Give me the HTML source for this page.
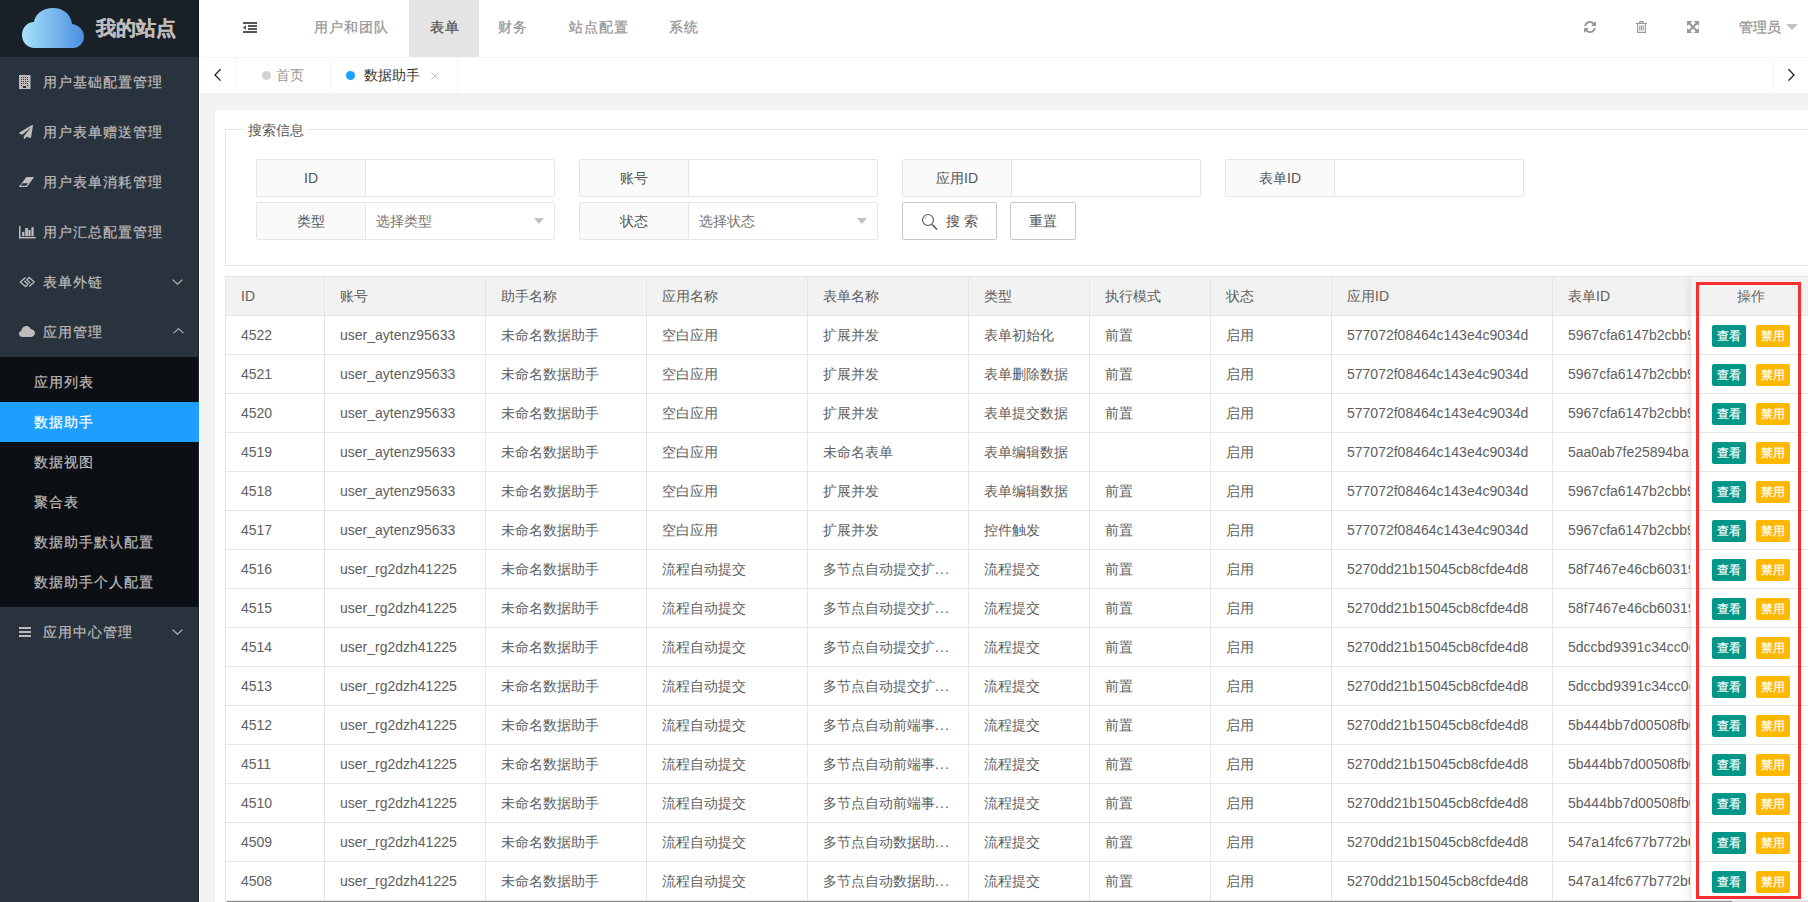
<!DOCTYPE html>
<html><head><meta charset="utf-8">
<style>
*{box-sizing:border-box;margin:0;padding:0}
html,body{width:1808px;height:902px;overflow:hidden;background:#f2f2f2;font-family:"Liberation Sans",sans-serif;position:relative}
.abs{position:absolute}
svg{position:absolute;overflow:visible}
#side{left:0;top:0;width:199px;height:902px;background:#28333E}
#side .edge{left:198px;top:0;width:1px;height:902px;background:rgba(0,0,0,.3)}
#wcol{left:199px;top:0;width:1px;height:902px;background:#fff}
#logo{left:0;top:0;width:199px;height:57px;background:#192027}
#logo .t{left:96px;top:15px;font-size:20px;font-weight:bold;color:rgb(191,187,187);-webkit-text-stroke:0.3px rgb(191,187,187);line-height:26px;white-space:nowrap}
.mi{left:0;width:198px;height:50px;color:rgb(191,187,187);font-size:14px;letter-spacing:1px;-webkit-text-stroke:0.2px currentColor;line-height:50px;white-space:nowrap}
.mi .tx{position:absolute;left:43px;top:0}
#sub{left:0;top:357px;width:198px;height:250px;background:#0c0f13}
.si{left:0;width:199px;height:40px;line-height:40px;font-size:14px;letter-spacing:1px;-webkit-text-stroke:0.2px currentColor;color:rgb(191,187,187);white-space:nowrap}
.si .tx{position:absolute;left:34px;top:0}
.si.on{background:#1E9FFF;color:#fff}
#hdr{left:199px;top:0;width:1609px;height:57px;background:#fff}
.nv{top:0;height:57px;line-height:55px;font-size:14px;letter-spacing:1px;-webkit-text-stroke:0.3px currentColor;color:#979797;white-space:nowrap}
#tabs{left:199px;top:57px;width:1609px;height:36px;background:#fff;border-top:1px solid #f6f6f6}
.tdiv{top:0;width:1px;height:35px;background:#f6f6f6}
.tt{top:57px;height:36px;line-height:36px;font-size:14px;white-space:nowrap}
#card{left:215px;top:110px;width:1700px;height:900px;background:#fff;border-radius:2px}
#fs{left:225px;top:129px;width:1700px;height:137px;border:1px solid #e6e6e6}
#legend{left:245px;top:120px;padding:0 3px;background:#fff;font-size:14px;line-height:20px;color:#5a5a5a}
.lab{position:absolute;height:38px;width:110px;border:1px solid #e6e6e6;background:#fafafa;border-radius:2px 0 0 2px;font-size:14px;color:#555;text-align:center;line-height:36px}
.inp{position:absolute;height:38px;width:190px;border:1px solid #e6e6e6;border-left:none;background:#fff;border-radius:0 2px 2px 0;font-size:14px;color:#757575;line-height:36px;padding-left:10px}
.tri{position:absolute;width:0;height:0;border-left:5px solid transparent;border-right:5px solid transparent;border-top:6px solid #c2c2c2}
.btn{position:absolute;height:38px;border:1px solid #c9c9c9;border-radius:2px;background:#fff;font-size:14px;color:#555;line-height:36px;text-align:center}
#tb{position:absolute;left:0;top:0;width:1808px;height:902px}
.tl{position:absolute;left:225px;top:276px;width:1600px;height:625px;border-left:1px solid #e6e6e6;border-top:1px solid #e6e6e6;background:#fff}
.hdrow{position:absolute;left:226px;width:1600px;height:38px;background:#f2f2f2}
.hl{position:absolute;left:225px;width:1600px;height:1px;background:#e6e6e6}
.vl{position:absolute;top:277px;width:1px;height:624px;background:#e6e6e6}
.c{position:absolute;height:38px;line-height:38px;font-size:14px;color:#606060;padding-left:16px;white-space:nowrap;overflow:hidden}
.el{letter-spacing:1.1px}
#fix{position:absolute;left:1690px;top:276px;width:130px;height:625px;background:#fff;box-shadow:-1px 0 8px rgba(0,0,0,.08);border-top:1px solid #e6e6e6;border-left:1px solid #e6e6e6}
.fhd{position:absolute;left:0;top:0;width:120px;height:38px;line-height:38px;background:#f2f2f2;text-align:center;font-size:14px;color:#666}
.fhl{position:absolute;left:0;width:130px;height:1px;background:#e6e6e6}
.b1,.b2{position:absolute;height:22px;width:34px;line-height:22px;font-size:12px;color:#fff;-webkit-text-stroke:0.2px #fff;text-align:center;border-radius:2px}
.b1{left:21px;background:#009688}
.b2{left:65px;background:#FFB800}
#scr{left:226px;top:901px;width:1582px;height:1px;background:#e2e2e2}
#scrt{left:227px;top:901px;width:1505px;height:1px;background:#8f8f8f}
#red{left:1696px;top:282px;width:105px;height:617px;border:3px solid #fa2e2e}
</style></head><body>
<div id="side" class="abs">
  <div id="logo" class="abs">
    <svg style="left:22px;top:8px" width="62" height="40" viewBox="0 0 62 40">
      <defs><linearGradient id="cg" x1="0" x2="1" y1="0" y2="0"><stop offset="0" stop-color="#a8e2fb"/><stop offset="1" stop-color="#4a8fe0"/></linearGradient></defs>
      <path d="M13 40 C5 40 0 34 0 27 C0 20 5 14 12 14 C13 6 21 0 31 0 C41 0 49 6 50 16 C56 17 62 21 62 29 C62 35 57 40 51 40 Z" fill="url(#cg)"/>
    </svg>
    <div class="abs t">我的站点</div>
  </div>
  <div class="abs mi" style="top:57px"><span class="tx">用户基础配置管理</span></div>
  <div class="abs mi" style="top:107px"><span class="tx">用户表单赠送管理</span></div>
  <div class="abs mi" style="top:157px"><span class="tx">用户表单消耗管理</span></div>
  <div class="abs mi" style="top:207px"><span class="tx">用户汇总配置管理</span></div>
  <div class="abs mi" style="top:257px"><span class="tx">表单外链</span></div>
  <div class="abs mi" style="top:307px"><span class="tx">应用管理</span></div>
  <div id="sub" class="abs"></div>
  <div class="abs edge"></div>
  <div class="abs si" style="top:362px"><span class="tx">应用列表</span></div>
  <div class="abs si on" style="top:402px"><span class="tx">数据助手</span></div>
  <div class="abs si" style="top:442px"><span class="tx">数据视图</span></div>
  <div class="abs si" style="top:482px"><span class="tx">聚合表</span></div>
  <div class="abs si" style="top:522px"><span class="tx">数据助手默认配置</span></div>
  <div class="abs si" style="top:562px"><span class="tx">数据助手个人配置</span></div>
  <div class="abs mi" style="top:607px"><span class="tx">应用中心管理</span></div>
  <!-- icons -->
  <svg style="left:19px;top:75px" width="12" height="14" viewBox="0 0 12 14"><path fill="rgb(191,187,187)" d="M0 0H11.5V14H0Z"/><g fill="#28333E"><rect x="2" y="2" width="1" height="1"/><rect x="4" y="2" width="1" height="1"/><rect x="6" y="2" width="1" height="1"/><rect x="8" y="2" width="1" height="1"/><rect x="2" y="4" width="1" height="1"/><rect x="4" y="4" width="1" height="1"/><rect x="6" y="4" width="1" height="1"/><rect x="8" y="4" width="1" height="1"/><rect x="2" y="6" width="1" height="1"/><rect x="4" y="6" width="1" height="1"/><rect x="6" y="6" width="1" height="1"/><rect x="8" y="6" width="1" height="1"/><rect x="2" y="8" width="1" height="1"/><rect x="4" y="8" width="1" height="1"/><rect x="6" y="8" width="1" height="1"/><rect x="8" y="8" width="1" height="1"/><rect x="2" y="10" width="1" height="1"/><rect x="8" y="10" width="1" height="1"/><rect x="4" y="11" width="3" height="2"/></g></svg>
  <svg style="left:19px;top:125px" width="14" height="14" viewBox="0 0 512 512"><path fill="rgb(191,187,187)" d="M476 3.2L12.5 270.6c-18.1 10.4-15.8 35.6 2.2 43.2L121 358.4l287.3-253.2c5.5-4.9 13.3 2.6 8.6 8.3L176 407v80.5c0 23.6 28.5 32.9 42.5 15.8L282 426l124.6 52.2c14.2 6 30.4-2.9 33-18.2l72-432C515 7.8 493.3-6.8 476 3.2z"/></svg>
  <svg style="left:19px;top:177px" width="16" height="10" viewBox="0 0 16 10"><path fill="rgb(191,187,187)" fill-rule="evenodd" d="M-0.3 9.9L7.4 0.1L15.2 0.1L7.9 9.9Z M1.6 8.8L3.7 6.2L9.1 6.2L7.1 8.8Z"/></svg>
  <svg style="left:19px;top:226px" width="17" height="13" viewBox="0 0 17 13"><g fill="rgb(191,187,187)"><rect x="0" y="0" width="1.5" height="12.4"/><rect x="0" y="10.9" width="16.7" height="1.5"/><rect x="3.1" y="5.8" width="2.3" height="4.3"/><rect x="6.2" y="2" width="2.7" height="8.1"/><rect x="9.3" y="3.9" width="2.3" height="6.2"/><rect x="12.4" y="1.2" width="2.3" height="8.9"/></g></svg>
  <svg style="left:16px;top:272px" width="22" height="20" viewBox="0 0 22 20"><g fill="none" stroke="rgb(191,187,187)" stroke-width="1.3" stroke-linejoin="round"><path d="M9.6 5.4L4.4 10L9.6 14.6L12 12.2L8.4 8.7"/><path d="M13.2 14.6L18.2 10L13.2 5.4L10.8 7.8L14.3 11.2"/></g></svg>
  <svg style="left:19px;top:326px" width="16" height="11" viewBox="0 0 16 11"><path fill="rgb(191,187,187)" d="M3.5 11C1.5 11 0 9.6 0 7.8C0 6.3 1 5.1 2.4 4.8C2.6 2.2 4.7 0 7.4 0C9.4 0 11 1.2 11.7 2.9C14 3 16 4.8 16 7.1C16 9.3 14.3 11 12 11Z"/></svg>
  <svg style="left:19px;top:627px" width="12" height="10" viewBox="0 0 12 10"><g fill="rgb(191,187,187)"><rect x="0" y="0" width="12" height="2"/><rect x="0" y="4" width="12" height="2"/><rect x="0" y="8" width="12" height="2"/></g></svg>
  <svg style="left:172px;top:279px" width="11" height="7" viewBox="0 0 11 7"><path fill="none" stroke="rgb(191,187,187)" stroke-width="1.1" d="M0.6 0.7L5.5 5.2L10.4 0.7"/></svg>
  <svg style="left:173px;top:327px" width="11" height="7" viewBox="0 0 11 7"><path fill="none" stroke="rgb(191,187,187)" stroke-width="1.1" d="M0.6 6.2L5.5 1.7L10.4 6.2"/></svg>
  <svg style="left:172px;top:629px" width="11" height="7" viewBox="0 0 11 7"><path fill="none" stroke="rgb(191,187,187)" stroke-width="1.1" d="M0.6 0.7L5.5 5.2L10.4 0.7"/></svg>
</div>
<div id="wcol" class="abs"></div>
<div id="hdr" class="abs"></div>
<svg style="left:243px;top:22px" width="14" height="11" viewBox="0 0 14 11"><g fill="#565656"><rect x="0" y="0" width="14" height="2"/><rect x="5" y="3" width="9" height="2"/><rect x="5" y="6" width="9" height="2"/><rect x="0" y="9" width="14" height="2"/><path d="M3 3V8L0 5.5Z"/></g></svg>
<div class="abs nv" style="left:314px">用户和团队</div>
<div class="abs nv" style="left:409px;width:70px;background:#e4e4e4;color:#565656;text-align:center;text-indent:1px">表单</div>
<div class="abs nv" style="left:498px">财务</div>
<div class="abs nv" style="left:569px">站点配置</div>
<div class="abs nv" style="left:669px">系统</div>
<svg style="left:1584px;top:21px" width="12" height="12" viewBox="0 0 1536 1536"><path fill="#979797" d="M1511 928q0 5-1 7-64 268-268 434.5T764 1536q-146 0-282.5-55T238 1324l-129 129q-19 19-45 19t-45-19-19-45V960q0-26 19-45t45-19h448q26 0 45 19t19 45-19 45l-137 137q71 66 161 102t187 36q134 0 250-65t186-179q11-17 53-117 8-23 30-23h192q13 0 22.5 9.5t9.5 22.5zm25-800v448q0 26-19 45t-45 19h-448q-26 0-45-19t-19-45 19-45l138-138Q969 256 768 256q-134 0-250 65T332 500q-11 17-53 117-8 23-30 23H50q-13 0-22.5-9.5T18 608v-7q65-268 270-434.5T768 0q146 0 284 55.5T1297 212l130-129q19-19 45-19t45 19 19 45z"/></svg>
<svg style="left:1636px;top:21px" width="11" height="12" viewBox="0 0 11 12"><g fill="none" stroke="#979797" stroke-width="1.1"><path d="M0 2.4H11"/><path d="M3.9 2.4V0.6H7.1V2.4"/><path d="M1.6 2.4V11.4H9.4V2.4"/><path d="M3.8 4.4V9.6M5.5 4.4V9.6M7.2 4.4V9.6"/></g></svg>
<svg style="left:1687px;top:21px" width="12" height="12" viewBox="0 0 12 12"><g fill="#979797"><path d="M0 0H5.3L0 5.1Z"/><path d="M12 0H6.7L12 5.1Z"/><path d="M0 12H5.3L0 6.9Z"/><path d="M12 12H6.7L12 6.9Z"/></g><path d="M1.5 1.5L10.5 10.5M10.5 1.5L1.5 10.5" stroke="#979797" stroke-width="2"/></svg>
<div class="abs nv" style="left:1739px;top:0;font-size:14px;letter-spacing:0">管理员</div>
<div class="abs tri" style="left:1786px;top:24px;border-left-width:6px;border-right-width:6px"></div>

<div id="tabs" class="abs">
  <div class="abs tdiv" style="left:36px"></div>
  <div class="abs tdiv" style="left:131px"></div>
  <div class="abs tdiv" style="left:258px"></div>
  <div class="abs tdiv" style="left:1574px"></div>
</div>
<svg style="left:214px;top:69px" width="8" height="13" viewBox="0 0 8 13"><path fill="none" stroke="#111" stroke-width="1.2" d="M6.6 0.2L1 6L6.6 11.6"/></svg>
<svg style="left:1787px;top:69px" width="8" height="13" viewBox="0 0 8 13"><path fill="none" stroke="#111" stroke-width="1.2" d="M1.4 0.2L7 6L1.4 11.6"/></svg>
<div class="abs" style="left:262px;top:71px;width:9px;height:9px;border-radius:50%;background:#d2d2d2"></div>
<div class="abs tt" style="left:276px;color:#999">首页</div>
<div class="abs" style="left:346px;top:71px;width:9px;height:9px;border-radius:50%;background:#1E9FFF"></div>
<div class="abs tt" style="left:364px;color:#333">数据助手</div>
<svg style="left:431px;top:72px" width="8" height="8" viewBox="0 0 8 8"><path fill="none" stroke="#c4c4c4" stroke-width="1" d="M0.5 0.5L7.5 7.5M7.5 0.5L0.5 7.5"/></svg>
<div id="card" class="abs"></div>
<div id="fs" class="abs"></div>
<div id="legend" class="abs">搜索信息</div>
<div class="lab" style="left:256px;top:159px">ID</div><div class="inp" style="left:366px;top:159px;width:189px"></div>
<div class="lab" style="left:579px;top:159px">账号</div><div class="inp" style="left:689px;top:159px;width:189px"></div>
<div class="lab" style="left:902px;top:159px">应用ID</div><div class="inp" style="left:1012px;top:159px;width:189px"></div>
<div class="lab" style="left:1225px;top:159px">表单ID</div><div class="inp" style="left:1335px;top:159px;width:189px"></div>
<div class="lab" style="left:256px;top:202px">类型</div><div class="inp" style="left:366px;top:202px;width:189px">选择类型</div><div class="tri" style="left:534px;top:218px"></div>
<div class="lab" style="left:579px;top:202px">状态</div><div class="inp" style="left:689px;top:202px;width:189px">选择状态</div><div class="tri" style="left:857px;top:218px"></div>
<div class="btn" style="left:902px;top:202px;width:95px"></div>
<svg style="left:922px;top:214px" width="16" height="16" viewBox="0 0 16 16"><g fill="none" stroke="#555" stroke-width="1.1"><circle cx="6" cy="6" r="5.5"/><path d="M10 10.5L15 15.5" stroke-width="1.6"/><path d="M3.2 4.6A3 3 0 0 1 4.4 3" stroke-width="0.9"/></g></svg>
<div class="abs" style="left:946px;top:202px;line-height:38px;font-size:14px;color:#555;white-space:nowrap">搜&nbsp;索</div>
<div class="btn" style="left:1010px;top:202px;width:66px">重置</div>
<div id="tb"><div class="tl"></div><div class="hdrow" style="top:277px"></div><div class="hl" style="top:315px"></div><div class="hl" style="top:354px"></div><div class="hl" style="top:393px"></div><div class="hl" style="top:432px"></div><div class="hl" style="top:471px"></div><div class="hl" style="top:510px"></div><div class="hl" style="top:549px"></div><div class="hl" style="top:588px"></div><div class="hl" style="top:627px"></div><div class="hl" style="top:666px"></div><div class="hl" style="top:705px"></div><div class="hl" style="top:744px"></div><div class="hl" style="top:783px"></div><div class="hl" style="top:822px"></div><div class="hl" style="top:861px"></div><div class="hl" style="top:900px"></div><div class="vl" style="left:324px"></div><div class="vl" style="left:485px"></div><div class="vl" style="left:646px"></div><div class="vl" style="left:807px"></div><div class="vl" style="left:968px"></div><div class="vl" style="left:1089px"></div><div class="vl" style="left:1210px"></div><div class="vl" style="left:1331px"></div><div class="vl" style="left:1552px"></div><div class="c" style="left:225px;top:277px;width:99px">ID</div><div class="c" style="left:324px;top:277px;width:161px">账号</div><div class="c" style="left:485px;top:277px;width:161px">助手名称</div><div class="c" style="left:646px;top:277px;width:161px">应用名称</div><div class="c" style="left:807px;top:277px;width:161px">表单名称</div><div class="c" style="left:968px;top:277px;width:121px">类型</div><div class="c" style="left:1089px;top:277px;width:121px">执行模式</div><div class="c" style="left:1210px;top:277px;width:121px">状态</div><div class="c" style="left:1331px;top:277px;width:221px">应用ID</div><div class="c" style="left:1552px;top:277px;width:138px">表单ID</div><div class="c" style="left:225px;top:316px;width:99px">4522</div><div class="c" style="left:324px;top:316px;width:161px">user_aytenz95633</div><div class="c" style="left:485px;top:316px;width:161px">未命名数据助手</div><div class="c" style="left:646px;top:316px;width:161px">空白应用</div><div class="c" style="left:807px;top:316px;width:161px">扩展并发</div><div class="c" style="left:968px;top:316px;width:121px">表单初始化</div><div class="c" style="left:1089px;top:316px;width:121px">前置</div><div class="c" style="left:1210px;top:316px;width:121px">启用</div><div class="c" style="left:1331px;top:316px;width:221px">577072f08464c143e4c9034d</div><div class="c" style="left:1552px;top:316px;width:138px">5967cfa6147b2cbb9</div><div class="c" style="left:225px;top:355px;width:99px">4521</div><div class="c" style="left:324px;top:355px;width:161px">user_aytenz95633</div><div class="c" style="left:485px;top:355px;width:161px">未命名数据助手</div><div class="c" style="left:646px;top:355px;width:161px">空白应用</div><div class="c" style="left:807px;top:355px;width:161px">扩展并发</div><div class="c" style="left:968px;top:355px;width:121px">表单删除数据</div><div class="c" style="left:1089px;top:355px;width:121px">前置</div><div class="c" style="left:1210px;top:355px;width:121px">启用</div><div class="c" style="left:1331px;top:355px;width:221px">577072f08464c143e4c9034d</div><div class="c" style="left:1552px;top:355px;width:138px">5967cfa6147b2cbb9</div><div class="c" style="left:225px;top:394px;width:99px">4520</div><div class="c" style="left:324px;top:394px;width:161px">user_aytenz95633</div><div class="c" style="left:485px;top:394px;width:161px">未命名数据助手</div><div class="c" style="left:646px;top:394px;width:161px">空白应用</div><div class="c" style="left:807px;top:394px;width:161px">扩展并发</div><div class="c" style="left:968px;top:394px;width:121px">表单提交数据</div><div class="c" style="left:1089px;top:394px;width:121px">前置</div><div class="c" style="left:1210px;top:394px;width:121px">启用</div><div class="c" style="left:1331px;top:394px;width:221px">577072f08464c143e4c9034d</div><div class="c" style="left:1552px;top:394px;width:138px">5967cfa6147b2cbb9</div><div class="c" style="left:225px;top:433px;width:99px">4519</div><div class="c" style="left:324px;top:433px;width:161px">user_aytenz95633</div><div class="c" style="left:485px;top:433px;width:161px">未命名数据助手</div><div class="c" style="left:646px;top:433px;width:161px">空白应用</div><div class="c" style="left:807px;top:433px;width:161px">未命名表单</div><div class="c" style="left:968px;top:433px;width:121px">表单编辑数据</div><div class="c" style="left:1089px;top:433px;width:121px"></div><div class="c" style="left:1210px;top:433px;width:121px">启用</div><div class="c" style="left:1331px;top:433px;width:221px">577072f08464c143e4c9034d</div><div class="c" style="left:1552px;top:433px;width:138px">5aa0ab7fe25894ba</div><div class="c" style="left:225px;top:472px;width:99px">4518</div><div class="c" style="left:324px;top:472px;width:161px">user_aytenz95633</div><div class="c" style="left:485px;top:472px;width:161px">未命名数据助手</div><div class="c" style="left:646px;top:472px;width:161px">空白应用</div><div class="c" style="left:807px;top:472px;width:161px">扩展并发</div><div class="c" style="left:968px;top:472px;width:121px">表单编辑数据</div><div class="c" style="left:1089px;top:472px;width:121px">前置</div><div class="c" style="left:1210px;top:472px;width:121px">启用</div><div class="c" style="left:1331px;top:472px;width:221px">577072f08464c143e4c9034d</div><div class="c" style="left:1552px;top:472px;width:138px">5967cfa6147b2cbb9</div><div class="c" style="left:225px;top:511px;width:99px">4517</div><div class="c" style="left:324px;top:511px;width:161px">user_aytenz95633</div><div class="c" style="left:485px;top:511px;width:161px">未命名数据助手</div><div class="c" style="left:646px;top:511px;width:161px">空白应用</div><div class="c" style="left:807px;top:511px;width:161px">扩展并发</div><div class="c" style="left:968px;top:511px;width:121px">控件触发</div><div class="c" style="left:1089px;top:511px;width:121px">前置</div><div class="c" style="left:1210px;top:511px;width:121px">启用</div><div class="c" style="left:1331px;top:511px;width:221px">577072f08464c143e4c9034d</div><div class="c" style="left:1552px;top:511px;width:138px">5967cfa6147b2cbb9</div><div class="c" style="left:225px;top:550px;width:99px">4516</div><div class="c" style="left:324px;top:550px;width:161px">user_rg2dzh41225</div><div class="c" style="left:485px;top:550px;width:161px">未命名数据助手</div><div class="c" style="left:646px;top:550px;width:161px">流程自动提交</div><div class="c" style="left:807px;top:550px;width:161px">多节点自动提交扩<span class="el">...</span></div><div class="c" style="left:968px;top:550px;width:121px">流程提交</div><div class="c" style="left:1089px;top:550px;width:121px">前置</div><div class="c" style="left:1210px;top:550px;width:121px">启用</div><div class="c" style="left:1331px;top:550px;width:221px">5270dd21b15045cb8cfde4d8</div><div class="c" style="left:1552px;top:550px;width:138px">58f7467e46cb60319</div><div class="c" style="left:225px;top:589px;width:99px">4515</div><div class="c" style="left:324px;top:589px;width:161px">user_rg2dzh41225</div><div class="c" style="left:485px;top:589px;width:161px">未命名数据助手</div><div class="c" style="left:646px;top:589px;width:161px">流程自动提交</div><div class="c" style="left:807px;top:589px;width:161px">多节点自动提交扩<span class="el">...</span></div><div class="c" style="left:968px;top:589px;width:121px">流程提交</div><div class="c" style="left:1089px;top:589px;width:121px">前置</div><div class="c" style="left:1210px;top:589px;width:121px">启用</div><div class="c" style="left:1331px;top:589px;width:221px">5270dd21b15045cb8cfde4d8</div><div class="c" style="left:1552px;top:589px;width:138px">58f7467e46cb60319</div><div class="c" style="left:225px;top:628px;width:99px">4514</div><div class="c" style="left:324px;top:628px;width:161px">user_rg2dzh41225</div><div class="c" style="left:485px;top:628px;width:161px">未命名数据助手</div><div class="c" style="left:646px;top:628px;width:161px">流程自动提交</div><div class="c" style="left:807px;top:628px;width:161px">多节点自动提交扩<span class="el">...</span></div><div class="c" style="left:968px;top:628px;width:121px">流程提交</div><div class="c" style="left:1089px;top:628px;width:121px">前置</div><div class="c" style="left:1210px;top:628px;width:121px">启用</div><div class="c" style="left:1331px;top:628px;width:221px">5270dd21b15045cb8cfde4d8</div><div class="c" style="left:1552px;top:628px;width:138px">5dccbd9391c34cc0c</div><div class="c" style="left:225px;top:667px;width:99px">4513</div><div class="c" style="left:324px;top:667px;width:161px">user_rg2dzh41225</div><div class="c" style="left:485px;top:667px;width:161px">未命名数据助手</div><div class="c" style="left:646px;top:667px;width:161px">流程自动提交</div><div class="c" style="left:807px;top:667px;width:161px">多节点自动提交扩<span class="el">...</span></div><div class="c" style="left:968px;top:667px;width:121px">流程提交</div><div class="c" style="left:1089px;top:667px;width:121px">前置</div><div class="c" style="left:1210px;top:667px;width:121px">启用</div><div class="c" style="left:1331px;top:667px;width:221px">5270dd21b15045cb8cfde4d8</div><div class="c" style="left:1552px;top:667px;width:138px">5dccbd9391c34cc0c</div><div class="c" style="left:225px;top:706px;width:99px">4512</div><div class="c" style="left:324px;top:706px;width:161px">user_rg2dzh41225</div><div class="c" style="left:485px;top:706px;width:161px">未命名数据助手</div><div class="c" style="left:646px;top:706px;width:161px">流程自动提交</div><div class="c" style="left:807px;top:706px;width:161px">多节点自动前端事<span class="el">...</span></div><div class="c" style="left:968px;top:706px;width:121px">流程提交</div><div class="c" style="left:1089px;top:706px;width:121px">前置</div><div class="c" style="left:1210px;top:706px;width:121px">启用</div><div class="c" style="left:1331px;top:706px;width:221px">5270dd21b15045cb8cfde4d8</div><div class="c" style="left:1552px;top:706px;width:138px">5b444bb7d00508fb0</div><div class="c" style="left:225px;top:745px;width:99px">4511</div><div class="c" style="left:324px;top:745px;width:161px">user_rg2dzh41225</div><div class="c" style="left:485px;top:745px;width:161px">未命名数据助手</div><div class="c" style="left:646px;top:745px;width:161px">流程自动提交</div><div class="c" style="left:807px;top:745px;width:161px">多节点自动前端事<span class="el">...</span></div><div class="c" style="left:968px;top:745px;width:121px">流程提交</div><div class="c" style="left:1089px;top:745px;width:121px">前置</div><div class="c" style="left:1210px;top:745px;width:121px">启用</div><div class="c" style="left:1331px;top:745px;width:221px">5270dd21b15045cb8cfde4d8</div><div class="c" style="left:1552px;top:745px;width:138px">5b444bb7d00508fb0</div><div class="c" style="left:225px;top:784px;width:99px">4510</div><div class="c" style="left:324px;top:784px;width:161px">user_rg2dzh41225</div><div class="c" style="left:485px;top:784px;width:161px">未命名数据助手</div><div class="c" style="left:646px;top:784px;width:161px">流程自动提交</div><div class="c" style="left:807px;top:784px;width:161px">多节点自动前端事<span class="el">...</span></div><div class="c" style="left:968px;top:784px;width:121px">流程提交</div><div class="c" style="left:1089px;top:784px;width:121px">前置</div><div class="c" style="left:1210px;top:784px;width:121px">启用</div><div class="c" style="left:1331px;top:784px;width:221px">5270dd21b15045cb8cfde4d8</div><div class="c" style="left:1552px;top:784px;width:138px">5b444bb7d00508fb0</div><div class="c" style="left:225px;top:823px;width:99px">4509</div><div class="c" style="left:324px;top:823px;width:161px">user_rg2dzh41225</div><div class="c" style="left:485px;top:823px;width:161px">未命名数据助手</div><div class="c" style="left:646px;top:823px;width:161px">流程自动提交</div><div class="c" style="left:807px;top:823px;width:161px">多节点自动数据助<span class="el">...</span></div><div class="c" style="left:968px;top:823px;width:121px">流程提交</div><div class="c" style="left:1089px;top:823px;width:121px">前置</div><div class="c" style="left:1210px;top:823px;width:121px">启用</div><div class="c" style="left:1331px;top:823px;width:221px">5270dd21b15045cb8cfde4d8</div><div class="c" style="left:1552px;top:823px;width:138px">547a14fc677b772b0</div><div class="c" style="left:225px;top:862px;width:99px">4508</div><div class="c" style="left:324px;top:862px;width:161px">user_rg2dzh41225</div><div class="c" style="left:485px;top:862px;width:161px">未命名数据助手</div><div class="c" style="left:646px;top:862px;width:161px">流程自动提交</div><div class="c" style="left:807px;top:862px;width:161px">多节点自动数据助<span class="el">...</span></div><div class="c" style="left:968px;top:862px;width:121px">流程提交</div><div class="c" style="left:1089px;top:862px;width:121px">前置</div><div class="c" style="left:1210px;top:862px;width:121px">启用</div><div class="c" style="left:1331px;top:862px;width:221px">5270dd21b15045cb8cfde4d8</div><div class="c" style="left:1552px;top:862px;width:138px">547a14fc677b772b0</div></div><div id="fix"><div class="fhl" style="top:38px"></div><div class="fhl" style="top:77px"></div><div class="fhl" style="top:116px"></div><div class="fhl" style="top:155px"></div><div class="fhl" style="top:194px"></div><div class="fhl" style="top:233px"></div><div class="fhl" style="top:272px"></div><div class="fhl" style="top:311px"></div><div class="fhl" style="top:350px"></div><div class="fhl" style="top:389px"></div><div class="fhl" style="top:428px"></div><div class="fhl" style="top:467px"></div><div class="fhl" style="top:506px"></div><div class="fhl" style="top:545px"></div><div class="fhl" style="top:584px"></div><div class="fhl" style="top:623px"></div><div class="fhd">操作</div><div class="b1" style="top:48px">查看</div><div class="b2" style="top:48px">禁用</div><div class="b1" style="top:87px">查看</div><div class="b2" style="top:87px">禁用</div><div class="b1" style="top:126px">查看</div><div class="b2" style="top:126px">禁用</div><div class="b1" style="top:165px">查看</div><div class="b2" style="top:165px">禁用</div><div class="b1" style="top:204px">查看</div><div class="b2" style="top:204px">禁用</div><div class="b1" style="top:243px">查看</div><div class="b2" style="top:243px">禁用</div><div class="b1" style="top:282px">查看</div><div class="b2" style="top:282px">禁用</div><div class="b1" style="top:321px">查看</div><div class="b2" style="top:321px">禁用</div><div class="b1" style="top:360px">查看</div><div class="b2" style="top:360px">禁用</div><div class="b1" style="top:399px">查看</div><div class="b2" style="top:399px">禁用</div><div class="b1" style="top:438px">查看</div><div class="b2" style="top:438px">禁用</div><div class="b1" style="top:477px">查看</div><div class="b2" style="top:477px">禁用</div><div class="b1" style="top:516px">查看</div><div class="b2" style="top:516px">禁用</div><div class="b1" style="top:555px">查看</div><div class="b2" style="top:555px">禁用</div><div class="b1" style="top:594px">查看</div><div class="b2" style="top:594px">禁用</div></div><div id="scr" class="abs"></div><div id="scrt" class="abs"></div><div id="red" class="abs"></div>
</body></html>
